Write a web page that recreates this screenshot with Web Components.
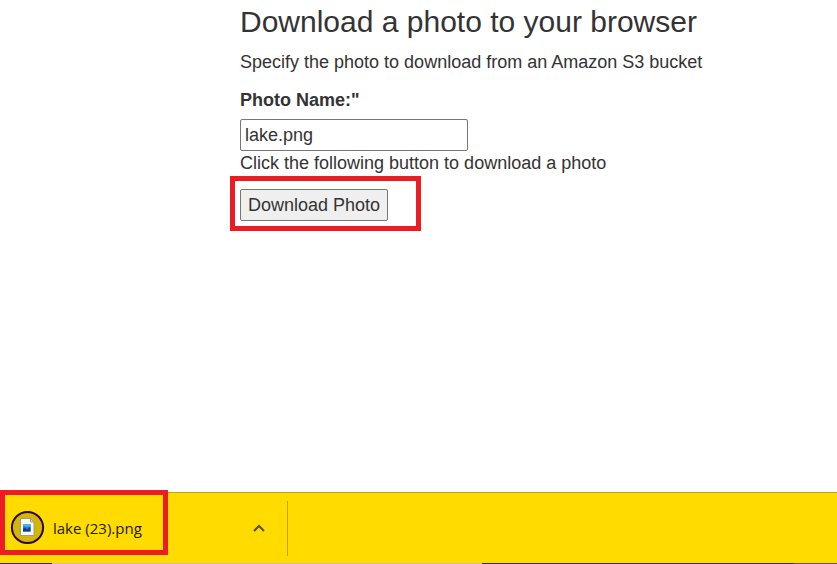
<!DOCTYPE html>
<html lang="en">
<head>
<meta charset="utf-8">
<title>Download a photo</title>
<style>
body { margin: 0; background: #fff; color: #333; font-family: "Liberation Sans", Arial, sans-serif; font-size: 18px; line-height: 24px; }
</style>
</head>
<body>
<app-window>
  <photo-form></photo-form>
  <download-shelf slot="shelf"><download-item>lake (23).png</download-item></download-shelf>
</app-window>
<script>
const define = (name, html) => customElements.define(name, class extends HTMLElement {
  constructor() {
    super();
    this.attachShadow({ mode: 'open' }).innerHTML = html;
  }
});

define('app-window', `
<style>
:host { display: flex; flex-direction: column; min-height: 100vh; }
main { flex: 1; padding: 4px 16px 0 240px; }
</style>
<main><slot></slot></main>
<slot name="shelf"></slot>`);

/* Red frame around whatever is slotted in */
define('mark-frame', `
<style>
:host { display: block; box-sizing: border-box; width: fit-content; border: 5px solid #ed1c24; padding: 8px 28px 5px 5px; }
</style>
<slot></slot>`);

define('photo-form', `
<style>
:host { display: block; }
h1 { margin: 0 0 10px; font-size: 30px; font-weight: 400; line-height: 36px; }
p { margin: 0; }
label { display: block; margin: 14px 0 7px; font-weight: 700; }
input, button { box-sizing: border-box; display: block; height: 32px; margin: 0; border: 1px solid #767676; border-radius: 2px; color: inherit; font: inherit; }
input { width: 228px; max-width: 100%; padding: 0 4px; background: #fff; }
button { padding: 0 7px; background: #efefef; white-space: nowrap; }
mark-frame { margin: 1px 0 0 -10px; }
</style>
<h1>Download a photo to your browser</h1>
<p>Specify the photo to download from an Amazon S3 bucket</p>
<label for="name">Photo Name:"</label>
<input id="name" type="text" value="lake.png">
<p>Click the following button to download a photo</p>
<mark-frame><button type="button">Download Photo</button></mark-frame>`);

define('download-shelf', `
<style>
:host { display: flex; align-items: stretch; background: #ffdb00; border-top: 1px solid #c2a611; padding: 8px 0; position: relative; }
.edge { position: absolute; left: 0; right: 0; bottom: 0; height: 1px;
  background: linear-gradient(90deg, #332b13 52px, #c8c4a4 52px, #c8c4a4 482px, #332b13 482px, #332b13 794px, #665812 794px); }
</style>
<slot></slot><div class="edge"></div>`);

define('download-item', `
<style>
:host { display: flex; align-items: center; box-sizing: border-box; width: 288px; height: 55px; padding: 0 18px 2px 10px; border-right: 1px solid #bda20a; position: relative;
  color: #222006; font: 15px/24px "Open Sans", "Noto Sans", sans-serif; }
svg { display: block; flex: none; }
.name { flex: 1; margin-left: 8px; }
button { border: 0; padding: 4px; margin: 0; background: none; color: #55501c; }
.ring { position: absolute; box-sizing: border-box; left: 0; top: -11px; width: 168px; height: 65px; border: 5px solid #ed1c24; pointer-events: none; }
</style>
<svg width="35" height="35" viewBox="0 0 35 35" aria-hidden="true">
  <circle cx="17.5" cy="17.5" r="15.6" fill="#d4b509" stroke="#2a0a0c" stroke-width="2"/>
  <path d="M10.5 8.500h10l3.500 3.500v13.500h-13.500z" fill="#fafafa" stroke="#a29c7c"/>
  <path d="M20.500 8.500v3.500h3.500z" fill="#ddd" stroke="#a29c7c"/>
  <path d="M13 14h7.500v7.500h-7.500z" fill="#1687d9"/>
  <path d="M13 14h7.500v2l-3 1-4.500-1z" fill="#4db1ea"/>
  <path d="M13 18.500l2-1 2 2 3.500-3v5h-7.500z" fill="#123f78"/>
</svg>
<span class="name"><slot></slot></span>
<button type="button" aria-label="More options"><svg width="12" height="8" viewBox="0 0 12 8"><path d="M1 7l5-5 5 5" fill="none" stroke="currentColor" stroke-width="2"/></svg></button>
<div class="ring"></div>`);
</script>
</body>
</html>
